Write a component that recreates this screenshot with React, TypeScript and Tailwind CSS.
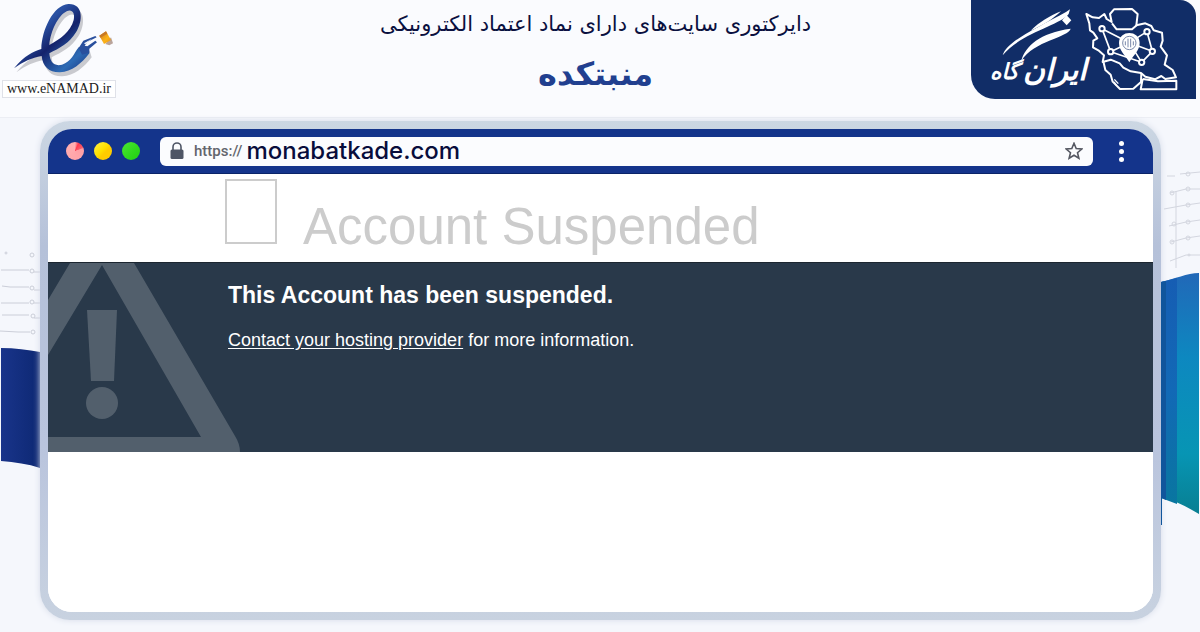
import React from "react";

const EMBLEM =
  "M42 205 C75 165 100 155 124 147 C125 90 160 15 205 12 C250 10 250 62 228 97 C208 130 178 145 148 160 C150 186 162 200 186 194 C214 186 222 160 236 142 L262 140 L268 160 C245 190 215 216 180 217 C148 218 128 200 125 168 C95 173 70 185 42 205Z M148 135 C180 118 212 95 221 60 C226 38 215 26 200 34 C175 46 152 92 148 135Z";

function EnamadLogo() {
  return (
    <a href="#enamad" aria-label="www.eNAMAD.ir" className="block w-[116px]">
      <svg viewBox="0 0 348 240" className="block h-20 w-[116px]" aria-hidden="true">
        <defs>
          <linearGradient id="swoosh" x1="0" y1="0" x2="1" y2="1">
            <stop offset="0" stopColor="#101a5c" />
            <stop offset="0.35" stopColor="#2a52a4" />
            <stop offset="0.55" stopColor="#14226b" />
            <stop offset="0.8" stopColor="#2d6bb5" />
            <stop offset="1" stopColor="#1a2f7c" />
          </linearGradient>
          <linearGradient id="amber" x1="0" y1="0" x2="1" y2="1">
            <stop offset="0" stopColor="#c9711c" />
            <stop offset="0.6" stopColor="#fcb419" />
            <stop offset="1" stopColor="#e58b16" />
          </linearGradient>
        </defs>
        <path d={EMBLEM} fill="#c9cacf" fillRule="evenodd" transform="translate(7 12)" />
        <path d={EMBLEM} fill="url(#swoosh)" fillRule="evenodd" />
        <path d="M236 144 L250 122 L286 108 L290 112 L262 126 L254 137 L262 139 L286 122 L291 127 L268 146 L268 158 L246 164Z" fill="#294f9d" />
        <path d="M252 130 L276 116 L256 133Z" fill="#f4f6fc" />
        <path d="M316 132 L333 112 L339 130 L328 136Z" fill="#b9a49c" />
        <path d="M298 107 L318 94 L333 120 L312 132Z" fill="url(#amber)" />
        <path d="M298 107 L318 94 L322 101 L301 113Z" fill="#c87925" />
      </svg>
      <span className="ml-0.5 block border border-[#dfe1e8] bg-white text-center font-['Liberation_Serif',serif] text-sm leading-4 text-[#222]">
        www.eNAMAD.ir
      </span>
    </a>
  );
}

function DirectoryLogo() {
  return (
    <a
      href="#directory"
      aria-label="ایران گاه"
      className="mr-1 block h-[99px] rounded-tr-2xl rounded-bl-3xl bg-[#112d67]"
    >
      <svg viewBox="33 0 675 297" className="h-full w-full" aria-hidden="true">
        <g
          fill="#fff"
          fontFamily="'DejaVu Sans', sans-serif"
          fontWeight="bold"
          fontStyle="italic"
          direction="rtl"
        >
          <text x="380" y="240" fontSize="90">ایران</text>
          <text x="176" y="236" fontSize="66">گاه</text>
        </g>
        <g fill="#fff">
          <path d="M128 166 C140 126 215 92 318 36 L330 28 L326 42 C300 76 180 100 128 166Z" />
          <path d="M212 92 C238 66 268 48 303 34 C280 56 250 76 212 92Z" />
          <path d="M184 182 C196 138 240 98 332 86 C326 112 222 122 184 182Z" />
          <path d="M320 46 L334 61 L320 76 L306 61Z" />
        </g>
        <g fill="none" stroke="#fff" strokeWidth="6" strokeLinejoin="round">
          <path d="M379 42 L398 52 L417 54 L433 42 L440 57 L455 66 L450 42 L462 28 L516 27 L533 42 L529 76 L556 70 L574 78 L581 91 L606 98 L608 122 L602 140 L621 166 L614 194 L638 210 L648 232 L616 237 L604 228 L585 238 L556 230 L543 219 L512 214 L490 203 L479 190 L452 179 L428 186 L432 166 L415 151 L399 142 L400 122 L412 115 L400 98 L390 91 L388 70Z" />
          <path d="M430 184 L436 210 L452 224 L458 245 L480 267 L520 266 L543 246 L544 219" />
          <path d="M548 237 L542 268 L649 268 L649 242 L594 244 L548 237" />
          <path d="M456 70 L470 88 L516 88 L530 76" />
          <path
            strokeWidth="5"
            d="M426 86 L452 155 L545 187 L577 154 L561 95 L508 128 L426 86 M452 155 L508 128 L577 154 M508 128 L545 187"
          />
        </g>
        <path d="M508 187 C494 164 477 150 477 129 C477 89 539 89 539 129 C539 150 522 164 508 187Z" fill="#fff" />
        <g fill="none" stroke="#7887a9" strokeWidth="3">
          <circle cx="508" cy="129" r="20" />
          <path d="M504 116 v26 M512 116 v26 M496 124 v12 M520 124 v12" />
        </g>
        <g fill="#112d67" stroke="#fff" strokeWidth="6">
          <circle cx="426" cy="86" r="8" />
          <circle cx="452" cy="155" r="8" />
          <circle cx="545" cy="187" r="8" />
          <circle cx="577" cy="154" r="8" />
          <circle cx="561" cy="95" r="8" />
        </g>
        <path d="M463 238 L475 251 M462 246 L470 257" stroke="#fff" strokeWidth="4" />
      </svg>
    </a>
  );
}

function LeftRibbon() {
  return (
    <svg viewBox="0 0 40 500" className="block h-[500px] w-10 shrink-0" aria-hidden="true">
      <defs>
        <linearGradient id="navy" x1="0" x2="1">
          <stop offset="0" stopColor="#19348a" />
          <stop offset="1" stopColor="#0d2873" />
        </linearGradient>
      </defs>
      <path d="M1 227 C15 227 28 229 40 231 V347 C28 343 15 341 1 340Z" fill="url(#navy)" />
      <g fill="none" stroke="#cbced8" strokeWidth="1">
        <path d="M1 149 H29 M34 151 H40 M2 165 L10 166 H29 M34 169 H40 M1 182 H29 M34 182 H40 M2 194 H29 M34 197 H40 M0 210 L18 211 H30" />
        <circle cx="6" cy="132" r="1" />
        <circle cx="32" cy="134" r="2" />
        <circle cx="32" cy="150" r="2" />
        <circle cx="32" cy="167" r="2" />
        <circle cx="32" cy="181" r="2" />
        <circle cx="33" cy="195" r="2" />
        <circle cx="33" cy="211" r="2" />
      </g>
    </svg>
  );
}

function RightRibbon() {
  return (
    <svg viewBox="0 0 39 500" className="block h-[500px] w-[39px] shrink-0" aria-hidden="true">
      <defs>
        <linearGradient id="teal" x1="0" y1="0" x2="0" y2="1">
          <stop offset="0" stopColor="#2168b8" />
          <stop offset="0.35" stopColor="#0d88c0" />
          <stop offset="0.75" stopColor="#0795b4" />
          <stop offset="1" stopColor="#087f92" />
        </linearGradient>
        <linearGradient id="azure" x1="0" y1="0" x2="0" y2="1">
          <stop offset="0" stopColor="#165db3" />
          <stop offset="0.5" stopColor="#1269b6" />
          <stop offset="1" stopColor="#0976a0" />
        </linearGradient>
      </defs>
      <path d="M0 161 C14 158 26 152 38 152 V393 C26 386 14 379 0 377Z" fill="url(#teal)" />
      <path d="M0 161 L16 157 V383 L0 377Z" fill="url(#azure)" />
      <path d="M0 161 L5 160 V379 L1 377 V404 H0Z" fill="#10559c" />
      <g fill="none" stroke="#d3d6df" strokeWidth="1">
        <path d="M6 55 H14 M19 53 L39 51 M9 72 L25 68 H39 M3 88 L25 84 L39 82 M8 105 L25 101 L39 99 M10 121 L25 117 L39 115 M9 140 L25 134 H39 M15 70 V147" />
        <circle cx="27" cy="53" r="2" />
        <circle cx="11" cy="72" r="2" />
        <circle cx="27" cy="68" r="2" />
        <circle cx="27" cy="84" r="2" />
        <circle cx="13" cy="103" r="2" />
        <circle cx="27" cy="101" r="2" />
        <circle cx="11" cy="121" r="2" />
        <circle cx="27" cy="117" r="2" />
        <circle cx="28" cy="134" r="1" />
      </g>
    </svg>
  );
}

function BrowserBar() {
  return (
    <div className="flex h-[45px] items-center border-b border-[#0a2468] bg-[#14348b] pr-[29px] pl-[18px]">
      <div className="flex shrink-0 gap-2.5">
        <span className="size-[18px] rounded-full bg-[conic-gradient(#ffb0b2_0deg,#ff3b4e_25deg,#f95c6b_65deg,#ff9fa5_75deg,#ffb0b2_360deg)]" />
        <span className="size-[18px] rounded-full bg-[linear-gradient(135deg,#fff04a_0%,#ffe100_45%,#ffcc00_60%)]" />
        <span className="size-[18px] rounded-full bg-[linear-gradient(135deg,#4be632_0%,#2fd91c_60%,#22cf13_100%)]" />
      </div>
      <div className="ml-5 flex h-[29px] min-w-0 flex-1 items-center rounded-md bg-[#fbfcfe] pr-2.5 pl-2.5">
        <svg viewBox="0 0 14 18" className="h-[18px] w-3.5 shrink-0" aria-hidden="true">
          <path d="M3 8 V5 a4 4 0 0 1 8 0 V8" fill="none" stroke="#4e5565" strokeWidth="1.6" />
          <rect x="0.5" y="7.5" width="13" height="9.5" rx="1.5" fill="#4e5565" />
        </svg>
        <span className="ml-2.5 font-['Roboto',sans-serif] text-[15px] font-medium text-[#63656d]">https://</span>
        <input
          aria-label="Address"
          readOnly
          value="monabatkade.com"
          className="ml-1 min-w-0 flex-1 bg-transparent font-['Inter',sans-serif] text-2xl leading-7 font-medium text-[#080d3c] outline-none"
        />
        <button type="button" aria-label="Bookmark" className="shrink-0">
          <svg viewBox="0 0 18 18" className="block size-[18px]" aria-hidden="true">
            <path
              d="M9 1.3 L11.2 6.5 L16.8 7 L12.5 10.7 L13.9 16.3 L9 13.3 L4.1 16.3 L5.5 10.7 L1.2 7 L6.8 6.5Z"
              fill="none"
              stroke="#555862"
              strokeWidth="1.6"
            />
          </svg>
        </button>
      </div>
      <button type="button" aria-label="Menu" className="ml-[26px] flex shrink-0 flex-col gap-[3px]">
        <span className="size-[5px] rounded-full bg-white" />
        <span className="size-[5px] rounded-full bg-white" />
        <span className="size-[5px] rounded-full bg-white" />
      </button>
    </div>
  );
}

function SuspendedPage() {
  return (
    <div className="flex-1 bg-white font-['Liberation_Sans',sans-serif]">
      <div className="flex h-[88px] items-start pt-[5px] pl-[177px]">
        <span className="h-[65px] w-[52px] shrink-0 border-2 border-[#cccccc]" />
        <h2 className="mt-[18px] ml-[26px] text-[51px] leading-[60px] whitespace-nowrap text-[#cccccc]">
          Account Suspended
        </h2>
      </div>
      <div className="flex h-[190px] border-t border-[#1c2630] bg-[#29394a] text-white">
        <svg viewBox="0 0 192 189" className="block h-[189px] w-48 shrink-0" aria-hidden="true">
          <g fill="#525f6c">
            <path d="M22 0 H86 L187 173 Q192 181 192 189 H0 V174 H153 L54 2 L0 92 V37Z" />
            <path d="M39 47 H69 L66 118 H43Z" />
            <circle cx="54" cy="140" r="16" />
          </g>
        </svg>
        <div className="-ml-3 pt-4">
          <h3 className="text-[23px] leading-8 font-bold">This Account has been suspended.</h3>
          <p className="mt-[15px] text-lg leading-7">
            <a href="#contact" className="underline underline-offset-2">
              Contact your hosting provider
            </a>{" "}
            for more information.
          </p>
        </div>
      </div>
    </div>
  );
}

export default function App() {
  return (
    <div className="flex min-h-screen flex-col bg-[#f5f7fc]">
      <header className="grid h-[118px] grid-cols-[220px_1fr_229px] items-start border-b border-[#eceef4] bg-[#fafbfe]">
        <EnamadLogo />
        <div dir="rtl" className="flex flex-col items-center pt-1.5 font-['DejaVu_Sans',sans-serif]">
          <p className="text-[21px] leading-9 text-[#0a1040]">دایرکتوری سایت‌های دارای نماد اعتماد الکترونیکی</p>
          <h1 className="mt-2 text-[32px] leading-[48px] font-bold text-[#213f8f]">منبتکده</h1>
        </div>
        <DirectoryLogo />
      </header>
      <div className="flex items-start pt-[3px]">
        <LeftRibbon />
        <main className="flex h-[499px] min-w-0 flex-1 rounded-[30px] bg-[linear-gradient(180deg,#ccd7e3_0%,#b5c1d9_25%,#b9c4dd_65%,#c8d2e0_100%)] p-2 shadow-[0_0_6px_#d5dbe8]">
          <div className="flex min-w-0 flex-1 flex-col overflow-hidden rounded-3xl bg-white">
            <BrowserBar />
            <SuspendedPage />
          </div>
        </main>
        <RightRibbon />
      </div>
    </div>
  );
}
